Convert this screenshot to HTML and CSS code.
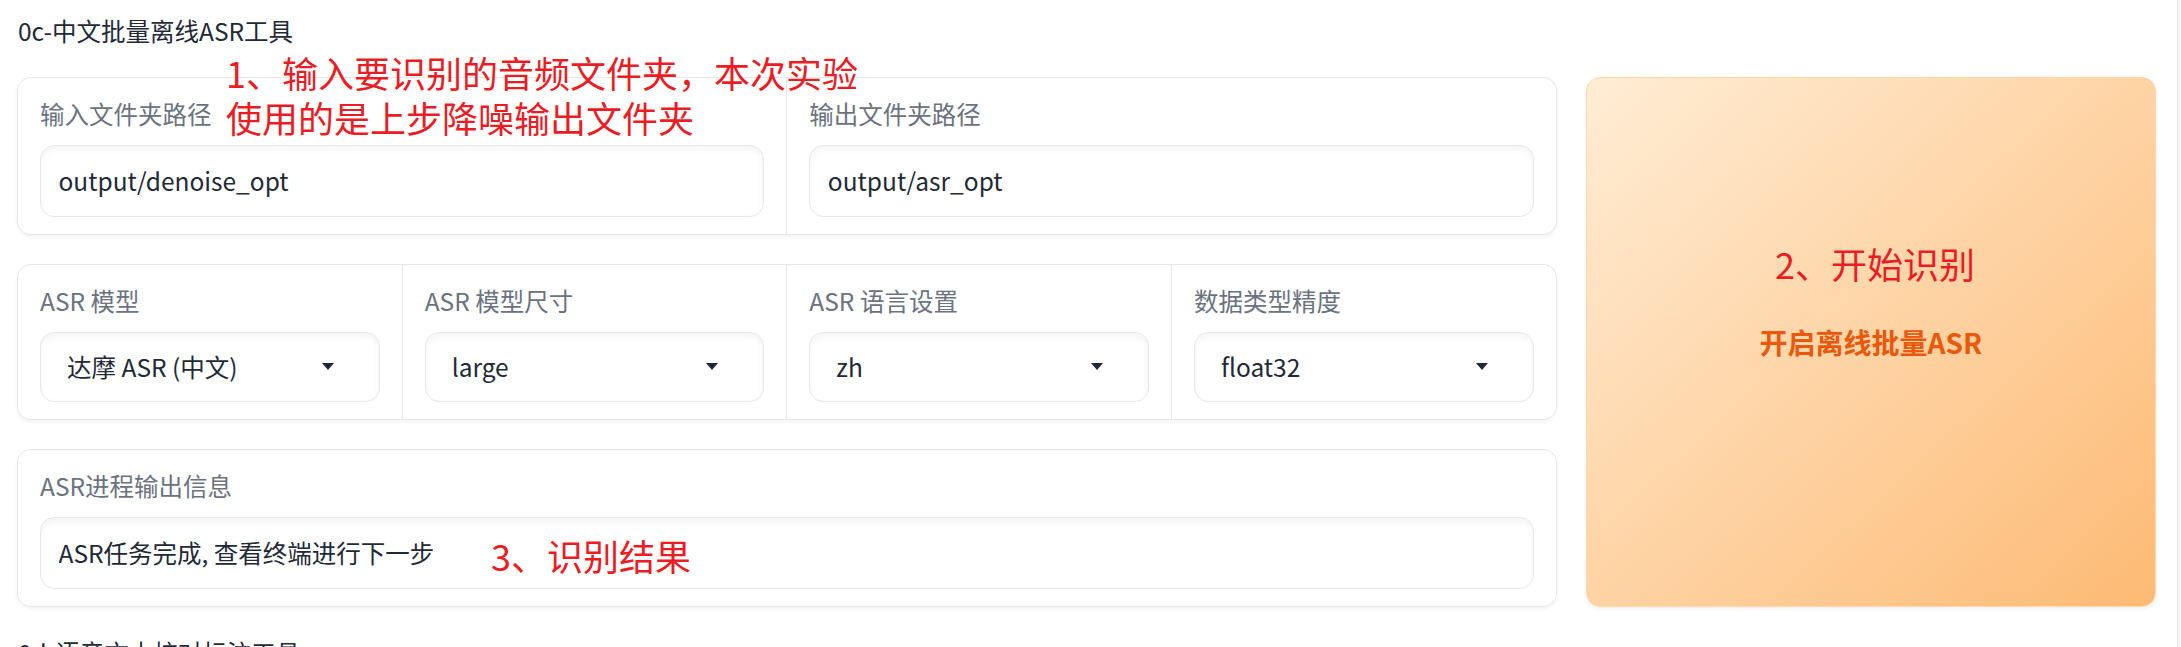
FILE: index.html
```html
<!DOCTYPE html>
<html lang="zh">
<head>
    <meta charset="UTF-8">
    <meta name="viewport" content="width=device-width, initial-scale=1.0">
    <title>0c-中文批量离线ASR工具</title>
    <link rel="stylesheet" href="styles.css">
</head>
<body>
    <div class="page">
        <div class="tool-title">0c-中文批量离线ASR工具</div>

        <div class="tool-row">
            <div class="tool-forms">
                <div class="panel cols-2">
                    <div class="cell">
                        <span class="field-label">输入文件夹路径</span>
                        <input class="field-input" type="text" value="output/denoise_opt">
                    </div>
                    <div class="cell">
                        <span class="field-label">输出文件夹路径</span>
                        <input class="field-input" type="text" value="output/asr_opt">
                    </div>
                </div>

                <div class="panel cols-4">
                    <div class="cell">
                        <span class="field-label">ASR 模型</span>
                        <div class="select-box"><span>达摩 ASR (中文)</span><i class="caret"></i></div>
                    </div>
                    <div class="cell">
                        <span class="field-label">ASR 模型尺寸</span>
                        <div class="select-box"><span>large</span><i class="caret"></i></div>
                    </div>
                    <div class="cell">
                        <span class="field-label">ASR 语言设置</span>
                        <div class="select-box"><span>zh</span><i class="caret"></i></div>
                    </div>
                    <div class="cell">
                        <span class="field-label">数据类型精度</span>
                        <div class="select-box"><span>float32</span><i class="caret"></i></div>
                    </div>
                </div>

                <div class="panel">
                    <div class="cell">
                        <span class="field-label">ASR进程输出信息</span>
                        <input class="field-input" type="text" value="ASR任务完成, 查看终端进行下一步" readonly>
                    </div>
                </div>
            </div>

            <button class="run-btn" type="button">开启离线批量ASR</button>
        </div>

        <div class="tool-title">0d-语音文本校对标注工具</div>

        <!-- 红色步骤说明 -->
        <div class="note note-input">1、输入要识别的音频文件夹，本次实验<br>使用的是上步降噪输出文件夹</div>
        <div class="note note-start">2、开始识别</div>
        <div class="note note-result">3、识别结果</div>
    </div>
</body>
</html>
```

FILE: styles.css
```css
body {
    margin: 0;
    background-color: #f7f7f7;
    font-family: "Noto Sans CJK SC", "Noto Sans", sans-serif;
    color: #1f2937;
}
.page {
    position: relative;
    box-sizing: border-box;
    width: calc(100% - 3px);
    min-height: 100vh;
    padding: 13px 21px 0 17px;
    background-color: #ffffff;
    border-right: 1px solid #e3e3e3;
    display: flex;
    flex-direction: column;
    gap: 28px;
}
.tool-title {
    font-size: 24.5px;
    line-height: 36px;
    padding-left: 1px;
}
.tool-row {
    display: grid;
    grid-template-columns: minmax(0, 2.7fr) minmax(0, 1fr);
    gap: 29px;
}
.tool-forms {
    display: flex;
    flex-direction: column;
    gap: 29px;
}
.panel {
    display: grid;
    grid-template-columns: 1fr;
    gap: 1px;
    background-color: #e5e7eb;
    border: 1px solid #e5e7eb;
    border-radius: 14px;
    overflow: hidden;
    box-shadow: 0 2px 4px rgba(0, 0, 0, 0.05);
}
.panel.cols-2 {
    grid-template-columns: repeat(2, 1fr);
}
.panel.cols-4 {
    grid-template-columns: repeat(4, 1fr);
}
.cell {
    background-color: #ffffff;
    padding: 17.5px 22px;
    display: flex;
    flex-direction: column;
}
.field-label {
    font-size: 24.5px;
    line-height: 35px;
    color: #6b7280;
    margin-bottom: 14px;
}
.field-input {
    box-sizing: border-box;
    width: 100%;
    height: 72px;
    padding: 0 17.5px;
    border: 1px solid #e5e7eb;
    border-radius: 14px;
    background-color: #ffffff;
    box-shadow: inset 0 3px 7px rgba(0, 0, 0, 0.05);
    font-family: inherit;
    font-size: 24.5px;
    color: #1f2937;
    outline: none;
}
.select-box {
    box-sizing: border-box;
    height: 70px;
    padding: 0 45px 0 26px;
    border: 1px solid #e5e7eb;
    border-radius: 14px;
    box-shadow: inset 0 3px 7px rgba(0, 0, 0, 0.05);
    display: flex;
    align-items: center;
    justify-content: space-between;
    font-size: 24.5px;
    color: #1f2937;
}
.caret {
    width: 0;
    height: 0;
    border-left: 6px solid transparent;
    border-right: 6px solid transparent;
    border-top: 7px solid #1f2937;
}
.run-btn {
    border: 1px solid #fed7aa;
    border-radius: 14px;
    background: linear-gradient(to bottom right, #ffedd5, #fdba74);
    box-shadow: 0 2px 4px rgba(0, 0, 0, 0.06);
    color: #ea580c;
    font-family: inherit;
    font-size: 28px;
    font-weight: 700;
    cursor: pointer;
}
.note {
    position: absolute;
    font-size: 36px;
    line-height: 45px;
    color: #ec1c24;
    white-space: nowrap;
}
.note-input {
    left: 226px;
    top: 50px;
}
.note-start {
    left: 1775px;
    top: 241px;
}
.note-result {
    left: 491px;
    top: 533px;
}
```
